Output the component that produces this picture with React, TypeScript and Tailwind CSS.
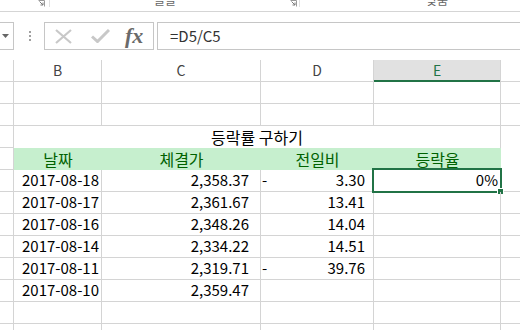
const font = "font-['Noto_Sans_CJK_KR','Noto_Sans',sans-serif]";
const grid = "border-[#d4d4d4]";

type Row = { b?: string; c?: string; dSign?: string; d?: string; e?: string };

const rows: Row[] = [
  { b: "2017-08-18", c: "2,358.37", dSign: "-", d: "3.30", e: "0%" },
  { b: "2017-08-17", c: "2,361.67", d: "13.41" },
  { b: "2017-08-16", c: "2,348.26", d: "14.04" },
  { b: "2017-08-14", c: "2,334.22", d: "14.51" },
  { b: "2017-08-11", c: "2,319.71", dSign: "-", d: "39.76" },
  { b: "2017-08-10", c: "2,359.47" },
  {},
  {},
];

function Launcher() {
  return (
    <svg width="7" height="7" viewBox="0 0 7 7" className="shrink-0">
      <path d="M0.5 0.5H6.5V6.5" fill="none" stroke="#9a9a9a" />
      <path d="M1.5 1.5L5 5M5 2.5V5H2.5" fill="none" stroke="#7a7a7a" />
    </svg>
  );
}

function Ribbon() {
  return (
    <div className="flex h-[12px] items-start overflow-hidden border-b border-[#d5d5d5] text-[12px] text-[#666]">
      <div className="w-[38px] shrink-0" />
      <Launcher />
      <div className="w-[4px] shrink-0" />
      <div className="h-[7px] w-px shrink-0 bg-[#e1e1e1]" />
      <div className="w-[104px] shrink-0" />
      <div className="-mt-[8px] w-[24px] shrink-0 whitespace-nowrap leading-[16px]">글꼴</div>
      <div className="w-[112px] shrink-0" />
      <Launcher />
      <div className="w-[2px] shrink-0" />
      <div className="h-[7px] w-px shrink-0 bg-[#e1e1e1]" />
      <div className="w-[126px] shrink-0" />
      <div className="-mt-[8px] w-[26px] shrink-0 whitespace-nowrap leading-[16px]">맞춤</div>
    </div>
  );
}

function FormulaBar() {
  return (
    <div className="mt-[10px] flex h-[28px] items-stretch">
      <div className="flex w-[14px] shrink-0 items-center border-y border-r border-[#c6c6c6] pl-[2px]">
        <svg width="7" height="4" viewBox="0 0 7 4">
          <path d="M0 0H7L3.5 4Z" fill="#666" />
        </svg>
      </div>
      <div className="flex w-[30px] shrink-0 flex-col items-center justify-center gap-[2px] pl-[2px]">
        <span className="h-[2px] w-[2px] bg-[#a0a0a0]" />
        <span className="h-[2px] w-[2px] bg-[#a0a0a0]" />
        <span className="h-[2px] w-[2px] bg-[#a0a0a0]" />
      </div>
      <div className="flex w-[110px] shrink-0 items-center border border-[#c6c6c6]">
        <svg width="17" height="15" viewBox="0 0 17 15" className="ml-[10px]">
          <path d="M1 1L16 14M16 1L1 14" stroke="#c8c8c8" strokeWidth="2.2" />
        </svg>
        <svg width="19" height="14" viewBox="0 0 19 14" className="ml-[19px]">
          <path d="M1 7.5L6.5 12.5L18 1" fill="none" stroke="#c8c8c8" strokeWidth="3" />
        </svg>
        <span className="ml-[15px] font-['Liberation_Serif',serif] text-[22px] font-bold italic leading-none text-[#6a6a6a]">
          fx
        </span>
      </div>
      <div className="w-[3px] shrink-0" />
      <div className={`flex flex-1 items-center border-y border-l border-[#c6c6c6] pl-[12px] text-[15px] text-[#333] ${font}`}>
        =D5/C5
      </div>
    </div>
  );
}

function Header() {
  const cell = `flex h-full items-center justify-center border-r ${grid} text-[14px] text-[#444]`;
  return (
    <div className={`mt-[10px] flex h-[22px] border-b ${grid} ${font}`}>
      <div className={`w-[14px] shrink-0 border-r ${grid}`} />
      <div className={`${cell} w-[88px] shrink-0`}>B</div>
      <div className={`${cell} w-[159px] shrink-0`}>C</div>
      <div className={`${cell} w-[113px] shrink-0`}>D</div>
      <div className={`${cell} relative w-[127px] shrink-0 bg-[#e1e1e1] !text-[#217346]`}>
        E
        <div className="absolute -bottom-px left-0 right-0 h-[2px] bg-[#217346]" />
      </div>
      <div className="flex-1" />
    </div>
  );
}

function Cell({ w, children, className = "" }: { w: string; children?: React.ReactNode; className?: string }) {
  return (
    <div className={`flex h-full shrink-0 items-end border-r ${grid} pb-[1px] leading-[20px] ${w} ${className}`}>
      {children}
    </div>
  );
}

export default function App() {
  return (
    <div className={`h-[330px] w-[520px] overflow-hidden bg-white ${font}`}>
      <Ribbon />
      <FormulaBar />
      <Header />
      <div className="text-[15px] text-black">
        {[0, 1].map((i) => (
          <div key={i} className={`flex h-[22px] border-b ${grid}`}>
            <Cell w="w-[14px]" />
            <Cell w="w-[88px]" />
            <Cell w="w-[159px]" />
            <Cell w="w-[113px]" />
            <Cell w="w-[127px]" />
          </div>
        ))}
        <div className="flex h-[22px]">
          <Cell w="w-[14px]" className={`border-b ${grid}`} />
          <Cell w="w-[487px]" className="justify-center text-[16px]">
            등락률 구하기
          </Cell>
        </div>
        <div className="flex h-[22px]">
          <Cell w="w-[14px]" className={`border-b ${grid}`} />
          <div className="flex h-full w-[487px] shrink-0 bg-[#c6efce] text-[16px] leading-[20px] text-[#006100]">
            <div className="flex w-[88px] items-end justify-center pb-[1px]">날짜</div>
            <div className="flex w-[159px] items-end justify-center pb-[1px]">체결가</div>
            <div className="flex w-[113px] items-end justify-center pb-[1px]">전일비</div>
            <div className="flex w-[127px] items-end justify-center pb-[1px]">등락율</div>
          </div>
        </div>
        {rows.map((r, i) => (
          <div key={i} className={`flex h-[22px] border-b ${grid}`}>
            <Cell w="w-[14px]" />
            <Cell w="w-[88px]" className="justify-end pr-[2px]">
              {r.b}
            </Cell>
            <Cell w="w-[159px]" className="justify-end pr-[11px]">
              {r.c}
            </Cell>
            <Cell w="w-[113px]" className="justify-between pl-[1px] pr-[8px]">
              <span>{r.dSign}</span>
              <span>{r.d}</span>
            </Cell>
            <Cell w="w-[127px]" className="relative justify-end pr-[2px]">
              {r.e}
              {i === 0 && (
                <div className="absolute -left-[2px] -top-[2px] h-[25px] w-[130px] border-2 border-[#217346]">
                  <div className="absolute -bottom-[4px] -right-[4px] h-[7px] w-[7px] border border-white bg-[#217346]" />
                </div>
              )}
            </Cell>
          </div>
        ))}
      </div>
    </div>
  );
}
